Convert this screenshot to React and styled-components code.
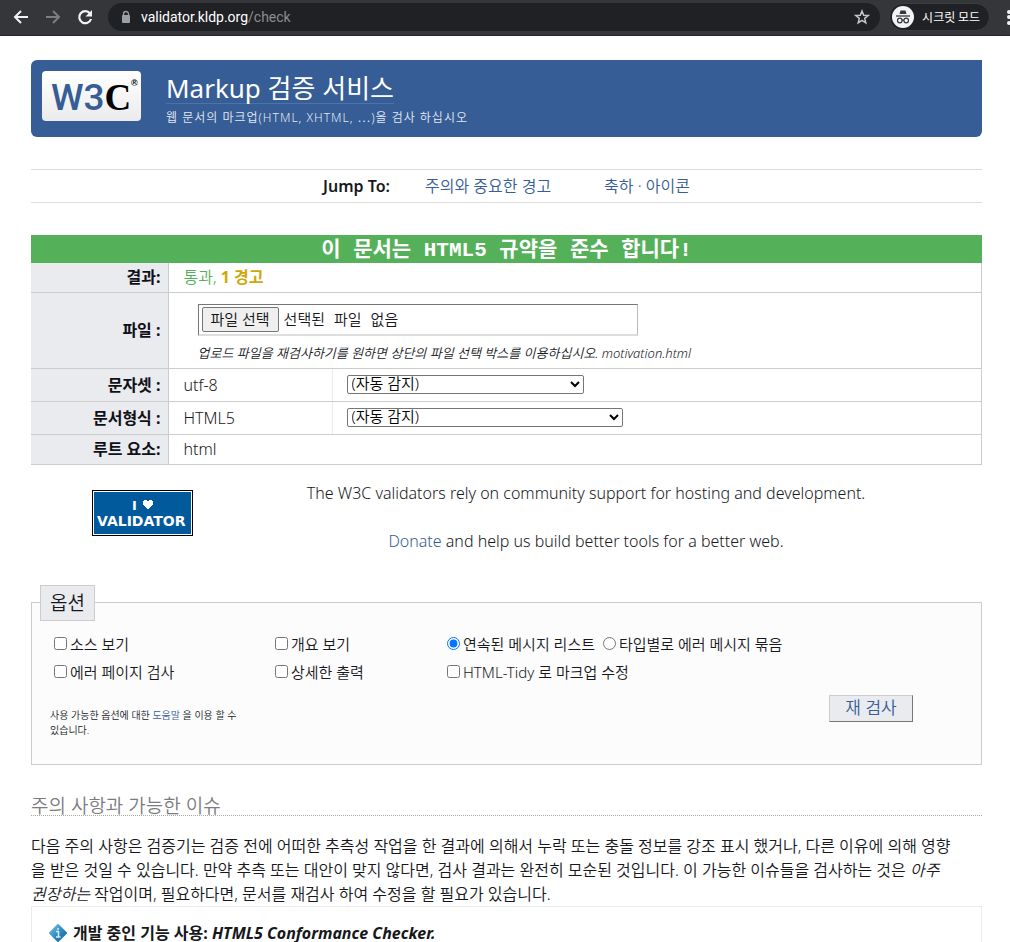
import React from "react";
import styled, { createGlobalStyle } from "styled-components";

const sans = `"Noto Sans", "Noto Sans CJK KR", sans-serif`;
const mono = `"Liberation Mono", "Noto Sans CJK KR", monospace`;

const GlobalStyle = createGlobalStyle`
  * { box-sizing: border-box; }
  html { height: 100%; overflow: hidden; }
  body {
    margin: 0;
    height: 100%;
    overflow: hidden;
    background: #fff;
    color: #16181c;
    font: 350 16px/24px ${sans};
  }
  a { color: #365d95; text-decoration: none; }
  p, h1, h2, h3 { margin: 0; }
`;

const Toolbar = styled.header`
  display: flex;
  align-items: center;
  height: 36px;
  padding: 0 0 2px 12px;
  background: #35363a;
  border-bottom: 1px solid #242528;
  overflow: hidden;
  color: #fff;
`;

const NavButton = styled.button`
  flex: none;
  display: flex;
  width: 18px;
  height: 18px;
  margin-right: 14px;
  padding: 0;
  border: 0;
  background: none;
  color: ${(p) => (p.$dim ? "#7d7e81" : "#f1f3f4")};
`;

const AddressBar = styled.div`
  flex: 1;
  min-width: 0;
  display: flex;
  align-items: center;
  height: 28px;
  padding: 0 10px;
  border-radius: 14px;
  background: #202124;
`;

const Url = styled.span`
  flex: 1;
  margin-left: 7px;
  font: 400 14px/20px Roboto, sans-serif;
  color: #fff;
  span { color: #8b8e92; }
`;

const Incognito = styled.button`
  flex: none;
  display: flex;
  align-items: center;
  gap: 8px;
  height: 28px;
  margin: 0 15px 0 9px;
  padding: 0 9px 0 2px;
  border: 1px solid #3c3d41;
  border-radius: 14px;
  background: #202124;
  color: #fff;
  font: 400 12px/16px "Noto Sans CJK KR", sans-serif;
`;

const Page = styled.main`
  padding: 24px 28px 0 31px;
`;

const Banner = styled.div`
  display: flex;
  gap: 25px;
  height: 77px;
  padding: 11px;
  border-radius: 6px 0 6px 6px;
  background: #365d95;
  color: #fff;
`;

const LogoLink = styled.a`
  flex: none;
  width: 99px;
  height: 50px;
  border-radius: 4px;
  background: linear-gradient(#fff, #ebebeb);
`;

const BannerTitle = styled.h1`
  display: inline-block;
  height: 33px;
  border-bottom: 1px solid #4a73a8;
  font: 400 26px/34px ${sans};
`;

const Tagline = styled.p`
  padding-top: 4px;
  font-size: 12px;
  line-height: 20px;
  letter-spacing: 1px;
  color: #e4eaf4;
`;

const JumpBar = styled.nav`
  display: flex;
  justify-content: center;
  height: 34px;
  margin-top: 32px;
  border: solid #ddd;
  border-width: 1px 0;
  line-height: 32px;
  strong { margin-right: 35px; font-weight: 600; }
  a + a { margin-left: 53px; }
`;

const Verdict = styled.h2`
  height: 28px;
  margin-top: 32px;
  background: #55b05a;
  color: #fff;
  text-align: center;
  font: 700 21px/32px ${mono};
`;

const Results = styled.table`
  width: 100%;
  border-collapse: collapse;
  table-layout: fixed;
  border-right: 1px solid #ccc;
  th, td { padding: 0; border-bottom: 1px solid #ccc; }
  th {
    padding-right: 7px;
    background: #eaebee;
    border-right: 1px solid #ccc;
    text-align: right;
    font-weight: 700;
    color: #101018;
  }
  td { padding-left: 15px; }
`;

const Column = styled.col`
  width: ${(p) => p.$w}px;
`;

const Row = styled.tr`
  height: ${(p) => p.$h}px;
`;

const ValueCell = styled.td`
  && { border-right: 1px solid #eaebee; }
`;

const PickerCell = styled.td`
  && { padding-left: 14px; }
`;

const Pass = styled.span`
  color: #55b05a;
  b { color: #d0a70a; font-weight: 700; }
`;

const FileBox = styled.div`
  display: flex;
  align-items: baseline;
  width: 440px;
  height: 32px;
  margin: 6px 0 0 14px;
  padding: 2px 3px;
  border: solid;
  border-color: #767676 #bbb #ddd #767676;
  border-width: 1px 1px 2px 1px;
  font: 350 15px/20px ${mono};
`;

const FileButton = styled.button`
  height: 25px;
  margin-right: 5px;
  padding: 0 8px;
  border: 1px solid #767676;
  border-radius: 2px;
  background: #efefef;
  color: #111;
  font: 350 15px/20px ${sans};
`;

const FileNote = styled.p`
  margin: 7px 0 0 14px;
  font-size: 13px;
  line-height: 20px;
  font-style: italic;
`;

const Picker = styled.div`
  position: relative;
  width: ${(p) => p.$w}px;
  height: 19px;
  svg {
    position: absolute;
    top: 5px;
    right: 4px;
    pointer-events: none;
  }
`;

const Select = styled.select`
  appearance: none;
  display: block;
  width: 100%;
  height: 19px;
  padding: 0 4px 2px;
  border: 1px solid #767676;
  border-radius: 2px;
  background: #fff;
  color: #000;
  font: 350 15px/15px ${sans};
`;

const Support = styled.section`
  display: flex;
  padding: 16px 3px 0 0;
`;

const BadgeLink = styled.a`
  flex: none;
  width: 101px;
  height: 46px;
  margin: 9px 0 0 61px;
`;

const SupportText = styled.div`
  flex: 1;
  text-align: center;
  p + p { margin-top: 24px; }
`;

const Options = styled.fieldset`
  height: 180px;
  margin: 32px 0 0;
  padding: 0 18px;
  border: 1px solid #ccc;
  background: #fcfcfc;
`;

const Legend = styled.legend`
  height: 36px;
  margin-left: -10px;
  padding: 0 9px;
  border: 1px solid #ccc;
  background: #eaebee;
  font-size: 19px;
  line-height: 34px;
`;

const OptionGrid = styled.div`
  display: grid;
  grid-template-columns: 221px 172px 1fr;
  padding-top: 9px;
  font-size: 15px;
  line-height: 28px;
  input { width: 13px; height: 13px; margin: 0 3px 0 4px; vertical-align: 0; }
`;

const OptionFooter = styled.div`
  display: flex;
  justify-content: space-between;
  padding: 9px 50px 0 0;
`;

const Help = styled.p`
  width: 200px;
  padding-top: 13px;
  font-size: 10px;
  line-height: 15px;
  word-break: keep-all;
`;

const Submit = styled.button`
  width: 84px;
  height: 27px;
  padding: 0;
  border: 1px solid;
  border-color: #ccc #767676 #767676 #ccc;
  background: #eaebee;
  color: #365d95;
  font: 350 17px/24px ${sans};
`;

const SectionTitle = styled.h3`
  height: 24px;
  margin-top: 27px;
  border-bottom: 1px dotted #aa9;
  color: #7c7c80;
  font: 350 19px/28px ${sans};
`;

const Intro = styled.p`
  margin-top: 18px;
`;

const Notice = styled.div`
  display: flex;
  align-items: center;
  gap: 5px;
  height: 54px;
  padding: 0 16px;
  border: 1px solid #eaebee;
  font-weight: 700;
`;

function W3CLogo() {
  return (
    <svg width="99" height="50" viewBox="0 0 99 50" role="img" aria-label="W3C">
      <text x="9" y="39" fontFamily="Roboto, sans-serif" fontWeight="500" fontSize="37" fill="#365d95">
        W3<tspan fontFamily="Liberation Serif, serif" fontWeight="700" fill="#000">C</tspan>
      </text>
      <text x="89" y="15" fontFamily="Liberation Sans, sans-serif" fontWeight="700" fontSize="9" fill="#000">®</text>
    </svg>
  );
}

function ValidatorBadge() {
  return (
    <svg width="101" height="46" viewBox="0 0 101 46" role="img" aria-label="I love validator" shapeRendering="crispEdges">
      <rect width="101" height="46" fill="#000" />
      <rect x="1" y="1" width="99" height="44" fill="#fff" />
      <rect x="2" y="2" width="97" height="42" fill="#005a9c" />
      <text x="40" y="20" fontFamily="DejaVu Sans, sans-serif" fontWeight="700" fontSize="13" fill="#fff">I</text>
      <path d="M52 10h3v1h2v-1h3v1h1v4h-1v1h-1v1h-1v1h-1v1h-2v-1h-1v-1h-1v-1h-1v-1h-1v-4h1z" fill="#fff" />
      <text x="5" y="36" fontFamily="DejaVu Sans, sans-serif" fontWeight="700" fontSize="14" fill="#fff">VALIDATOR</text>
    </svg>
  );
}

function InfoIcon() {
  return (
    <svg width="20" height="20" viewBox="0 0 20 20" aria-hidden="true">
      <defs>
        <linearGradient id="info" x1="0" y1="0" x2="1" y2="1">
          <stop offset="0" stopColor="#8cc4e4" />
          <stop offset="0.5" stopColor="#2f8dc4" />
          <stop offset="1" stopColor="#0f5f95" />
        </linearGradient>
      </defs>
      <path d="M9.300 1.300a1 1 0 0 1 1.400 0l8 8a1 1 0 0 1 0 1.400l-8 8a1 1 0 0 1-1.400 0l-8-8a1 1 0 0 1 0-1.400z" fill="url(#info)" />
      <path d="M8 8.500h2.500V14M8 14h4.500M10 5v2" stroke="#d6ebf6" strokeWidth="1.500" fill="none" />
    </svg>
  );
}

function AutoSelect({ id, width }) {
  return (
    <Picker $w={width}>
      <Select id={id}><option>(자동 감지)</option></Select>
      <svg width="10" height="8" viewBox="0 0 10 8" fill="none" stroke="#000" strokeWidth="2"><path d="M1 2l4 4 4-4" /></svg>
    </Picker>
  );
}

function Check({ id, type = "checkbox", children, ...rest }) {
  return (
    <span>
      <input id={id} type={type} {...rest} />
      <label htmlFor={id}>{children}</label>
    </span>
  );
}

export default function App() {
  return (
    <>
      <GlobalStyle />
      <Toolbar>
        <NavButton aria-label="Back">
          <svg width="18" height="18" viewBox="0 0 18 18" fill="none" stroke="currentColor" strokeWidth="2"><path d="M16 9H3M9 3L3 9l6 6" /></svg>
        </NavButton>
        <NavButton aria-label="Forward" $dim>
          <svg width="18" height="18" viewBox="0 0 18 18" fill="none" stroke="currentColor" strokeWidth="2"><path d="M2 9h13M9 3l6 6-6 6" /></svg>
        </NavButton>
        <NavButton aria-label="Reload">
          <svg width="18" height="18" viewBox="0 0 18 18"><path d="M14 5.500A6 6 0 1 0 15 11" fill="none" stroke="currentColor" strokeWidth="2.200" /><path d="M16 2v6.500H9.500z" fill="currentColor" /></svg>
        </NavButton>
        <AddressBar>
          <svg width="16" height="16" viewBox="0 0 16 16"><rect x="4" y="6" width="8" height="8" rx="1" fill="#9aa0a6" /><path d="M5.500 7V5a2.500 2.500 0 0 1 5 0v2" fill="none" stroke="#9aa0a6" strokeWidth="1.300" /></svg>
          <Url>validator.kldp.org<span>/check</span></Url>
          <svg width="16" height="16" viewBox="0 0 16 16" fill="none" stroke="#c4c7ca" strokeWidth="1.500"><path d="M8 2l1.700 4.200 4.500.3-3.500 2.900 1.100 4.400L8 11.400l-3.800 2.400 1.100-4.400L1.800 6.500l4.500-.3z" /></svg>
        </AddressBar>
        <Incognito>
          <svg width="22" height="22" viewBox="0 0 22 22"><circle cx="11" cy="11" r="11" fill="#f1f3f4" /><path d="M7.500 8l1-3.500h5l1 3.500z" fill="#35363a" /><path d="M4 10h14" stroke="#35363a" strokeWidth="1.300" /><g fill="none" stroke="#35363a" strokeWidth="1.200"><circle cx="7.800" cy="14.500" r="2.300" /><circle cx="14.200" cy="14.500" r="2.300" /><path d="M10 14.200h2" /></g></svg>
          시크릿 모드
        </Incognito>
        <svg width="5" height="18" viewBox="0 0 5 18" fill="#f1f3f4"><circle cx="4" cy="4" r="2" /><circle cx="4" cy="9" r="2" /><circle cx="4" cy="15" r="2" /></svg>
      </Toolbar>
      <Page>
        <Banner>
          <LogoLink href="#"><W3CLogo /></LogoLink>
          <div>
            <BannerTitle>Markup 검증 서비스</BannerTitle>
            <Tagline>웹 문서의 마크업(HTML, XHTML, ⋯)을 검사 하십시오</Tagline>
          </div>
        </Banner>
        <JumpBar>
          <strong>Jump To:</strong>
          <a href="#warnings">주의와 중요한 경고</a>
          <a href="#icons">축하 · 아이콘</a>
        </JumpBar>
        <form onSubmit={(e) => e.preventDefault()}>
          <Verdict>이 문서는 HTML5 규약을 준수 합니다!</Verdict>
          <Results>
            <colgroup><Column $w={137} /><Column $w={164} /><col /></colgroup>
            <tbody>
              <Row $h={29}><th scope="row">결과:</th><td colSpan={2}><Pass>통과, <b>1 경고</b></Pass></td></Row>
              <Row $h={76}>
                <th scope="row">파일 :</th>
                <td colSpan={2}>
                  <FileBox><FileButton type="button">파일 선택</FileButton>선택된 파일 없음</FileBox>
                  <FileNote>업로드 파일을 재검사하기를 원하면 상단의 파일 선택 박스를 이용하십시오. motivation.html</FileNote>
                </td>
              </Row>
              <Row $h={33}>
                <th scope="row"><label htmlFor="charset">문자셋 :</label></th>
                <ValueCell>utf-8</ValueCell>
                <PickerCell><AutoSelect id="charset" width={237} /></PickerCell>
              </Row>
              <Row $h={33}>
                <th scope="row"><label htmlFor="doctype">문서형식 :</label></th>
                <ValueCell>HTML5</ValueCell>
                <PickerCell><AutoSelect id="doctype" width={276} /></PickerCell>
              </Row>
              <Row $h={30}><th scope="row">루트 요소:</th><td colSpan={2}>html</td></Row>
            </tbody>
          </Results>
          <Support>
            <BadgeLink href="#"><ValidatorBadge /></BadgeLink>
            <SupportText>
              <p>The W3C validators rely on community support for hosting and development.</p>
              <p><a href="#">Donate</a> and help us build better tools for a better web.</p>
            </SupportText>
          </Support>
          <Options>
            <Legend>옵션</Legend>
            <OptionGrid>
              <Check id="ss">소스 보기</Check>
              <Check id="outline">개요 보기</Check>
              <span>
                <Check id="g0" type="radio" name="group" defaultChecked>연속된 메시지 리스트</Check>{" "}
                <Check id="g1" type="radio" name="group">타입별로 에러 메시지 묶음</Check>
              </span>
              <Check id="no200">에러 페이지 검사</Check>
              <Check id="verbose">상세한 출력</Check>
              <Check id="st">HTML-Tidy 로 마크업 수정</Check>
            </OptionGrid>
            <OptionFooter>
              <Help>사용 가능한 옵션에 대한 <a href="#">도움말</a> 을 이용 할 수 있습니다.</Help>
              <Submit type="submit">재 검사</Submit>
            </OptionFooter>
          </Options>
        </form>
        <SectionTitle>주의 사항과 가능한 이슈</SectionTitle>
        <Intro>
          다음 주의 사항은 검증기는 검증 전에 어떠한 추측성 작업을 한 결과에 의해서 누락 또는 충돌 정보를 강조 표시 했거나, 다른 이유에 의해 영향<br />을 받은 것일 수 있습니다. 만약 추측 또는 대안이 맞지 않다면, 검사 결과는 완전히 모순된 것입니다. 이 가능한 이슈들을 검사하는 것은 <em>아주<br />권장하는</em> 작업이며, 필요하다면, 문서를 재검사 하여 수정을 할 필요가 있습니다.
        </Intro>
        <Notice>
          <InfoIcon />
          <span>개발 중인 기능 사용: <em>HTML5 Conformance Checker.</em></span>
        </Notice>
      </Page>
    </>
  );
}
